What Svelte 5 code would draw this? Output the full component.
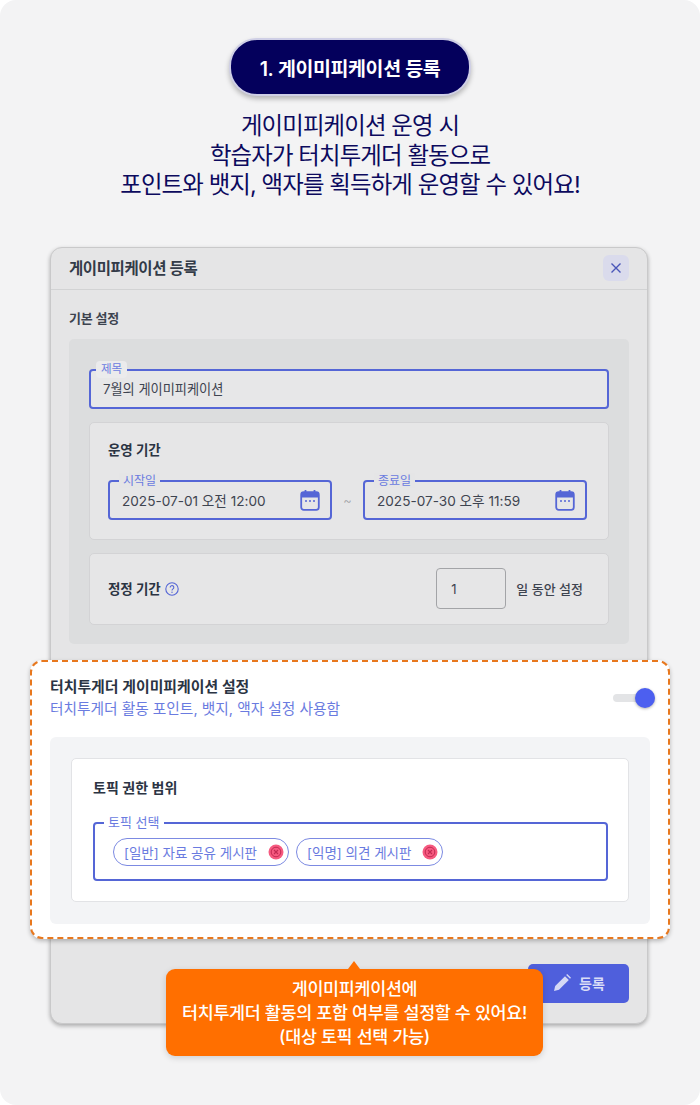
<script>
  const dateFields = [
    { label: '시작일', value: '2025-07-01 오전 12:00' },
    { label: '종료일', value: '2025-07-30 오후 11:59' }
  ];
  const topics = ['[일반] 자료 공유 게시판', '[익명] 의견 게시판'];
</script>

<div class="page">
  <div class="pill">1.&nbsp;게이미피케이션 등록</div>
  <p class="headline">게이미피케이션 운영 시<br />학습자가 터치투게더 활동으로<br />포인트와 뱃지, 액자를 획득하게 운영할 수 있어요!</p>

  <div class="modal">
    <header class="modal-head">
      <h2>게이미피케이션 등록</h2>
      <button class="close" aria-label="닫기">
        <svg width="12" height="12" viewBox="0 0 12 12"><path d="M1.5 1.5l9 9M10.5 1.5l-9 9" stroke="#4a56b8" stroke-width="1.4" fill="none" /></svg>
      </button>
    </header>

    <div class="modal-body">
      <h3 class="section-title">기본 설정</h3>
      <div class="panel">
        <div class="field title-field">
          <span class="legend boxed">제목</span>
          <span class="value">7월의 게이미피케이션</span>
        </div>

        <div class="card period">
          <h4>운영 기간</h4>
          <div class="dates">
            {#each dateFields as f, i}
              {#if i === 1}<span class="tilde">~</span>{/if}
              <div class="field date-field">
                <span class="legend">{f.label}</span>
                <span class="value date-value">{f.value}</span>
                <svg class="cal" width="20" height="22" viewBox="0 0 20 22">
                  <rect x="1.2" y="3.2" width="17.6" height="17.6" rx="2.5" fill="none" stroke="#5566d6" stroke-width="1.8" />
                  <path d="M1.2 5.5a2.3 2.3 0 0 1 2.3-2.3h13a2.3 2.3 0 0 1 2.3 2.3v3H1.2z" fill="#5566d6" />
                  <path d="M5.5 1v3M14.5 1v3" stroke="#5566d6" stroke-width="1.8" />
                  <path d="M5 12h2M9 12h2M13 12h2" stroke="#5566d6" stroke-width="1.6" />
                </svg>
              </div>
            {/each}
          </div>
        </div>

        <div class="card correction">
          <h4>정정 기간</h4>
          <svg class="help" width="14" height="14" viewBox="0 0 14 14">
            <circle cx="7" cy="7" r="6.2" fill="none" stroke="#5566d6" stroke-width="1.1" />
            <path d="M5.2 5.4a1.8 1.8 0 1 1 2.8 1.5c-.7.5-1 .8-1 1.6" fill="none" stroke="#5566d6" stroke-width="1.1" />
            <circle cx="7" cy="10.3" r=".7" fill="#5566d6" />
          </svg>
          <span class="days-input">1</span>
          <span class="days-label">일 동안 설정</span>
        </div>
      </div>

      <section class="highlight">
        <div class="highlight-head">
          <div>
            <h4>터치투게더 게이미피케이션 설정</h4>
            <p>터치투게더 활동 포인트, 뱃지, 액자 설정 사용함</p>
          </div>
          <span class="toggle"><span class="knob"></span></span>
        </div>
        <div class="inner">
          <div class="inner-card">
            <h4>토픽 권한 범위</h4>
            <div class="field topic-field">
              <span class="legend">토픽 선택</span>
              {#each topics as t}
                <span class="chip">
                  {t}
                  <svg width="16" height="16" viewBox="0 0 16 16">
                    <circle cx="8" cy="8" r="7.5" fill="#f65a80" />
                    <circle cx="8" cy="8" r="4.8" fill="none" stroke="#c22a52" stroke-width="1" />
                    <path d="M6 6l4 4M10 6l-4 4" stroke="#c22a52" stroke-width="1.1" />
                  </svg>
                </span>
              {/each}
            </div>
          </div>
        </div>
      </section>

      <footer class="modal-foot">
        <button class="save">
          <svg width="20" height="20" viewBox="0 0 20 20">
            <path d="M2 18l1.2-5L13 3.2l3.8 3.8L7 16.8z" fill="#d5d9f5" />
            <path d="M14.2 2l1-1 3.8 3.8-1 1z" fill="#d5d9f5" />
          </svg>
          등록
        </button>
      </footer>
    </div>
  </div>

  <div class="tip">게이미피케이션에<br />터치투게더 활동의 포함 여부를 설정할 수 있어요!<br />(대상 토픽 선택 가능)</div>
</div>

<style>
  :global(body) {
    background: #fff;
  }

  .page {
    position: relative;
    width: 700px;
    height: 1105px;
    box-sizing: border-box;
    padding-top: 38px;
    background: #f3f3f4;
    border-radius: 16px;
    overflow: hidden;
    font-family: Inter, "Noto Sans CJK KR", sans-serif;
    color: #2b3443;
  }

  h2, h3, h4, p {
    margin: 0;
  }

  .pill {
    width: 238px;
    height: 54px;
    margin: 0 auto;
    padding-left: 0;
    display: flex;
    align-items: center;
    justify-content: center;
    background: #04005c;
    border: 2px solid #cfcfe6;
    border-radius: 28px;
    box-shadow: 0 3px 5px rgba(0, 0, 0, 0.25);
    color: #fff;
    font-size: 19.5px;
    font-weight: 600;
    letter-spacing: -0.4px;
  }

  .headline {
    margin-top: 15px;
    text-align: center;
    font-size: 23.4px;
    font-weight: 400;
    line-height: 29.5px;
    letter-spacing: -0.85px;
    color: #0c0a5e;
  }

  .modal {
    width: 596px;
    height: 775px;
    margin: 47px 0 0 50px;
    background: #e5e5e6;
    border: 1px solid #c9c9ca;
    border-radius: 12px;
    box-shadow: 0 2px 4px rgba(0, 0, 0, 0.3);
  }

  .modal-head {
    height: 41px;
    padding: 0 18px;
    display: flex;
    align-items: center;
    justify-content: space-between;
    border-bottom: 1px solid #d2d3d4;
  }

  .modal-head h2 {
    margin-top: -3px;
    font-size: 15.5px;
    font-weight: 600;
    letter-spacing: -0.4px;
    color: #333b48;
  }

  .close {
    width: 26px;
    height: 26px;
    padding: 0;
    border: none;
    border-radius: 6px;
    background: #dadbec;
    display: flex;
    align-items: center;
    justify-content: center;
  }

  .modal-body {
    padding: 20px 18px 0;
  }

  .section-title {
    font-size: 13px;
    font-weight: 600;
    line-height: 16px;
    letter-spacing: -0.2px;
    color: #3c434f;
  }

  .panel {
    margin-top: 13px;
    height: 305px;
    box-sizing: border-box;
    padding: 30px 20px 0;
    background: #dcddde;
    border-radius: 5px;
  }

  .field {
    position: relative;
    box-sizing: border-box;
    display: flex;
    align-items: center;
    border: 2px solid #5566d6;
    border-radius: 4px;
  }

  .legend {
    position: absolute;
    top: -9px;
    left: 9px;
    padding: 0 4px;
    font-size: 12px;
    line-height: 15px;
    color: #6a7be0;
    background: #e5e5e6;
  }

  .legend.boxed {
    border-radius: 4px;
    top: -10px;
    padding: 1px 5px;
    left: 5px;
    font-size: 11.5px;
    background: #ebebec;
  }

  .value {
    font-size: 13.2px;
    color: #3e4450;
  }

  .date-value {
    font-size: 13.6px;
  }

  .title-field {
    height: 40px;
    padding-left: 12px;
    background: #e7e7e8;
  }

  .card {
    box-sizing: border-box;
    background: #e6e6e7;
    border: 1px solid #d3d3d5;
    border-radius: 5px;
  }

  .card h4 {
    font-size: 13.5px;
    font-weight: 600;
    line-height: 20px;
    letter-spacing: -0.1px;
    color: #2b3443;
  }

  .period {
    margin-top: 13px;
    height: 118px;
    padding: 17px 18px 0;
  }

  .dates {
    margin-top: 20px;
    display: flex;
    align-items: center;
  }

  .tilde {
    width: 31px;
    text-align: center;
    font-size: 13px;
    font-weight: 300;
    color: #a0a2a6;
  }

  .date-field {
    width: 224px;
    height: 40px;
    padding: 0 10px 0 12px;
    justify-content: space-between;
  }

  .correction {
    margin-top: 13px;
    height: 72px;
    padding: 0 25px 0 18px;
    display: flex;
    align-items: center;
  }

  .help {
    margin-left: 4px;
  }

  .days-input {
    margin-left: auto;
    box-sizing: border-box;
    width: 70px;
    height: 41px;
    padding-left: 14px;
    display: flex;
    align-items: center;
    border: 1px solid #a3a4a7;
    border-radius: 4px;
    font-size: 13px;
    color: #3e4450;
  }

  .days-label {
    margin-left: 10px;
    font-size: 13px;
    font-weight: 500;
    color: #3e4450;
  }

  .highlight {
    position: relative;
    box-sizing: border-box;
    width: 640px;
    height: 279px;
    margin: 16px 0 0 -39px;
    padding: 15px 18px 0;
    background: #fff;
    border: 2px dashed #e8781e;
    border-radius: 12px;
    box-shadow: 0 2px 4px rgba(0, 0, 0, 0.25);
  }

  .highlight-head {
    display: flex;
    align-items: center;
    justify-content: space-between;
  }

  .highlight-head h4 {
    font-size: 14.9px;
    font-weight: 600;
    line-height: 20px;
    color: #2b3443;
  }

  .highlight-head p {
    margin-top: 2px;
    font-size: 14.7px;
    line-height: 20px;
    color: #6a7be0;
  }

  .toggle {
    position: relative;
    width: 42px;
    height: 8px;
    margin-right: -5px;
    background: #e3e4e6;
    border-radius: 4px;
  }

  .knob {
    position: absolute;
    right: 0;
    top: -6px;
    width: 20px;
    height: 20px;
    border-radius: 50%;
    background: #4c5ff0;
    box-shadow: 0 1px 3px rgba(0, 0, 0, 0.3);
  }

  .inner {
    margin-top: 18px;
    height: 187px;
    box-sizing: border-box;
    padding: 21px 21px 0;
    background: #f3f4f6;
    border-radius: 6px;
  }

  .inner-card {
    box-sizing: border-box;
    height: 144px;
    padding: 19px 20px 0 21px;
    background: #fff;
    border: 1px solid #e2e3e6;
    border-radius: 5px;
  }

  .inner-card h4 {
    font-size: 14px;
    font-weight: 600;
    line-height: 20px;
    color: #2b3443;
  }

  .topic-field {
    margin-top: 24px;
    height: 59px;
    padding: 2px 0 0 18px;
    gap: 7px;
  }

  .topic-field .legend {
    background: #fff;
    font-size: 13px;
  }

  .chip {
    box-sizing: border-box;
    height: 28px;
    padding: 0 4px 0 10px;
    display: inline-flex;
    align-items: center;
    gap: 11px;
    border: 1px solid #7c8ae2;
    border-radius: 14px;
    font-size: 13.5px;
    color: #6a7be0;
  }

  .modal-foot {
    margin-top: 25px;
    display: flex;
    justify-content: flex-end;
  }

  .save {
    width: 101px;
    height: 39px;
    padding: 0;
    display: flex;
    align-items: center;
    justify-content: center;
    gap: 7px;
    border: none;
    border-radius: 5px;
    background: #4f5fdc;
    color: #d9dcf6;
    font-family: inherit;
    font-size: 14px;
    font-weight: 600;
  }

  .tip {
    position: absolute;
    left: 166px;
    top: 969px;
    width: 377px;
    height: 87px;
    box-sizing: border-box;
    padding-top: 8px;
    text-align: center;
    background: #ff6f00;
    border-radius: 9px;
    box-shadow: 0 2px 6px rgba(0, 0, 0, 0.15);
    color: #fff;
    font-size: 17.4px;
    font-weight: 500;
    line-height: 24px;
    letter-spacing: -0.3px;
  }

  .tip::before {
    content: "";
    position: absolute;
    left: 182px;
    top: -8px;
    border-left: 6px solid transparent;
    border-right: 6px solid transparent;
    border-bottom: 8px solid #ff6f00;
  }
</style>
